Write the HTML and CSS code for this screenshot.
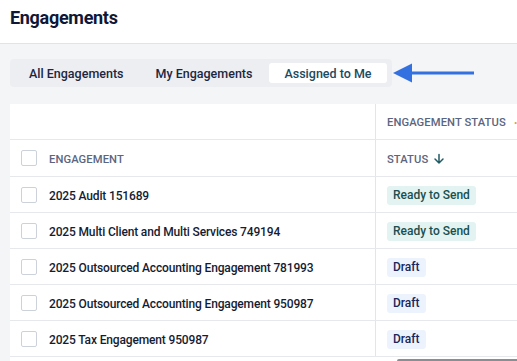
FILE: index.html
```html
<!DOCTYPE html>
<html>
<head>
	<meta charset="utf-8">
	<title>Engagements</title>
	<link rel="stylesheet" href="styles.css">
</head>
<body>

<div class="pagehead">
	<h1 class="title">Engagements</h1>
</div>

<div class="content">
	<div class="tabrow">
		<div class="tabs">
			<span class="tab">All Engagements</span>
			<span class="tab">My Engagements</span>
			<span class="tab active">Assigned to Me</span>
		</div>
		<svg class="pointer" width="84" height="20" viewBox="0 0 84 20">
			<polygon points="0,10 19,0.5 19,19.5" fill="#3370e0"/>
			<rect x="17" y="8.5" width="64" height="3" fill="#3370e0"/>
		</svg>
	</div>

	<div class="grid">
		<div class="group">
			<div class="cell first"></div>
			<div class="cell second hdr">ENGAGEMENT STATUS <span class="more">&middot;</span></div>
		</div>
		<div class="colhead">
			<div class="cell first"><span class="box"></span><span class="hdr">ENGAGEMENT</span></div>
			<div class="cell second hdr">STATUS
				<svg class="sorticon" width="12" height="12" viewBox="0 0 12 12">
					<path d="M6 1.5v8.5M2 6l4 4 4-4" fill="none" stroke="#1f5b63" stroke-width="1.5" stroke-linecap="round" stroke-linejoin="round"/>
				</svg>
			</div>
		</div>

		<div class="row">
			<div class="cell first"><span class="box"></span>2025 Audit 151689</div>
			<div class="cell second"><span class="badge ready">Ready to Send</span></div>
		</div>
		<div class="row">
			<div class="cell first"><span class="box"></span>2025 Multi Client and Multi Services 749194</div>
			<div class="cell second"><span class="badge ready">Ready to Send</span></div>
		</div>
		<div class="row">
			<div class="cell first"><span class="box"></span>2025 Outsourced Accounting Engagement 781993</div>
			<div class="cell second"><span class="badge draft">Draft</span></div>
		</div>
		<div class="row">
			<div class="cell first"><span class="box"></span>2025 Outsourced Accounting Engagement 950987</div>
			<div class="cell second"><span class="badge draft">Draft</span></div>
		</div>
		<div class="row">
			<div class="cell first"><span class="box"></span>2025 Tax Engagement 950987</div>
			<div class="cell second"><span class="badge draft">Draft</span></div>
		</div>
		<div class="scroll"><span class="thumb"></span></div>
	</div>
</div>

</body>
</html>
```

FILE: styles.css
```css
html, body {
	margin: 0;
	padding: 0;
	height: 100%;
	overflow: hidden;
}
body {
	font-family: Roboto, "Liberation Sans", sans-serif;
	color: #141c33;
	background: #f4f5f7;
}

.pagehead {
	height: 43px;
	background: #ffffff;
	border-bottom: 1px solid #e1e3e8;
	padding-left: 10px;
	display: flex;
	align-items: center;
}
.title {
	margin: 0 0 9px 0;
	font-size: 18px;
	font-weight: 700;
	color: #0f1836;
	letter-spacing: -0.3px;
}

.content {
	padding: 15px 0 0 10px;
}

.tabrow {
	display: flex;
	align-items: center;
}
.tabs {
	display: flex;
	gap: 2px;
	padding: 4px 5px 4px 4px;
	background: #eceef1;
	border-radius: 4px;
}
.tab {
	height: 20px;
	line-height: 21px;
	padding: 0 15px;
	font-size: 12.5px;
	font-weight: 500;
	color: #1d2640;
	border-radius: 3px;
}
.tab.active {
	background: #ffffff;
	color: #1c4a5e;
}
.pointer {
	display: block;
	margin-left: 1px;
}

.grid {
	margin-top: 17px;
	background: #ffffff;
	width: 560px;
}
.group, .colhead, .row {
	display: grid;
	grid-template-columns: 365px 1fr;
	border-bottom: 1px solid #e6e8ec;
}
.group {
	height: 35px;
}
.colhead {
	height: 36px;
}
.row {
	height: 35px;
}
.cell {
	display: flex;
	align-items: center;
	padding-top: 2px;
	font-size: 12px;
	font-weight: 500;
	letter-spacing: -0.15px;
}
.cell.first {
	padding-left: 11px;
}
.cell.second {
	border-left: 1px solid #e3e5e9;
	padding-left: 11px;
}
.hdr {
	font-size: 11.2px;
	font-weight: 500;
	color: #5b6580;
	letter-spacing: 0.1px;
}
.more {
	color: #e39a3a;
	margin-left: 8px;
	font-size: 14px;
}
.sorticon {
	margin-left: 5px;
}
.box {
	width: 14px;
	height: 14px;
	border: 1px solid #cdd2da;
	border-radius: 2px;
	margin: -2px 12px 0 0;
	background: #ffffff;
}
.row .cell.first {
	color: #141c33;
}

.badge {
	display: inline-block;
	height: 19px;
	line-height: 19px;
	margin-top: -1px;
	padding: 0 6px;
	border-radius: 3px;
	font-size: 12px;
	font-weight: 500;
	letter-spacing: 0;
}
.badge.ready {
	background: #e3f3f1;
	color: #1a4f4e;
}
.badge.draft {
	background: #edf3fd;
	color: #1b2757;
}

.scroll {
	height: 4px;
	position: relative;
}
.thumb {
	position: absolute;
	left: 387px;
	top: 2px;
	width: 200px;
	height: 4px;
	background: #8a8d93;
	border-radius: 2px;
}
```
